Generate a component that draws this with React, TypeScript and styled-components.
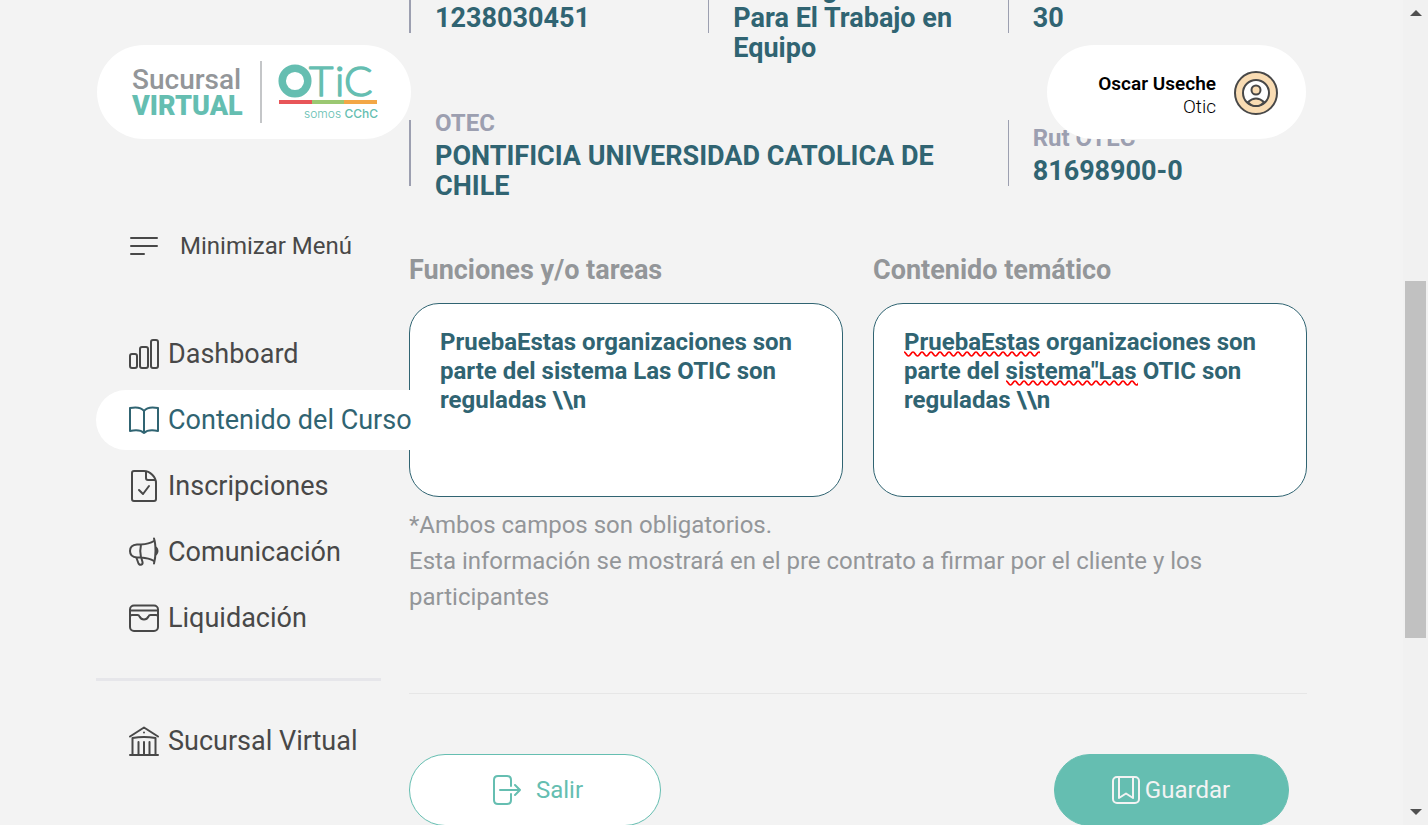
import React from "react";
import styled, { createGlobalStyle, css } from "styled-components";

const GlobalStyle = createGlobalStyle`
  *, *::before, *::after { box-sizing: border-box; }
  body {
    margin: 0;
    background: #f3f3f3;
    font-family: Roboto, "Liberation Sans", sans-serif;
  }
  button, textarea { font-family: inherit; }
`;

const color = {
  teal: "#306472",
  green: "#65beb1",
  grey: "#939699",
  label: "#9c9fb0",
  ink: "#484848",
};

const Shell = styled.div`
  display: flex;
  position: relative;
  height: 100vh;
  overflow: hidden;
`;

const Page = styled.div`
  flex: 1;
  min-width: 0;
  display: flex;
  align-items: flex-start;
  padding: 0 96px;
`;

const ScrollTrack = styled.div`
  flex: 0 0 25px;
  display: flex;
  flex-direction: column;
  align-items: center;
  padding: 10px 2px;
  background: #f1f1f1;
`;

const ScrollThumb = styled.div`
  align-self: stretch;
  flex: 357;
  background: #c1c1c1;
`;

const ScrollGap = styled.div<{ $grow: number }>`
  flex: ${(p) => p.$grow};
`;

const Arrow = styled.svg`
  display: block;
  width: 12px;
  height: 6px;
  fill: #505050;
`;

const Header = styled.header`
  position: absolute;
  z-index: 3;
  top: 45px;
  left: 0;
  right: 25px;
  display: flex;
  justify-content: space-between;
  padding: 0 97px;
`;

const Card = styled.div`
  display: flex;
  align-items: center;
  height: 94px;
  border-radius: 47px;
  background: #fff;
`;

const BrandCard = styled(Card)`
  width: 314px;
  padding-left: 35px;
`;

const BrandName = styled.div`
  width: 130px;
  height: 62px;
  padding-top: 6px;
  border-right: 2px solid #c4c6c8;
  font-size: 28px;
  line-height: 26px;
  font-weight: 500;
  color: ${color.grey};
`;

const BrandStrong = styled.strong`
  display: block;
  font-size: 27px;
  font-weight: 900;
  color: ${color.green};
`;

const OticMark = styled.svg`
  display: block;
  width: 100px;
  height: 58px;
  margin-left: 16px;
`;

const UserCard = styled(Card)`
  width: 259px;
  justify-content: flex-end;
  gap: 18px;
  padding: 2px 28px 0 0;
`;

const UserText = styled.div`
  padding-top: 4px;
  font-size: 19px;
  line-height: 23px;
  font-weight: 300;
  text-align: right;
  color: #000;
`;

const UserName = styled.div`
  font-weight: 600;
`;

const Avatar = styled.svg`
  display: block;
  width: 44px;
  height: 44px;
`;

const Sidebar = styled.nav`
  position: relative;
  z-index: 2;
  flex: 0 0 313px;
  min-width: 0;
  padding-top: 216px;
  color: ${color.ink};
`;

const Icon = styled.svg`
  display: block;
  flex: none;
  width: 30px;
  height: 30px;
  fill: none;
  stroke: currentColor;
  stroke-width: 2;
  stroke-linecap: round;
  stroke-linejoin: round;
  overflow: visible;
`;

const Minimize = styled.button`
  display: flex;
  align-items: center;
  gap: 21px;
  height: 60px;
  margin: 0 0 48px;
  padding: 0 0 0 33px;
  border: 0;
  background: none;
  color: inherit;
  font-size: 24px;
`;

const Menu = styled.ul`
  display: flex;
  flex-direction: column;
  gap: 6px;
  margin: 0;
  padding: 0;
  list-style: none;
`;

const MenuLink = styled.a<{ $active?: boolean }>`
  display: flex;
  align-items: center;
  gap: 9px;
  height: 60px;
  padding-left: 33px;
  border-radius: 30px 0 0 30px;
  font-size: 27px;
  white-space: nowrap;
  text-decoration: none;
  color: inherit;
  ${(p) =>
    p.$active &&
    css`
      margin-right: -2px;
      background: #fff;
      color: ${color.teal};
    `}
`;

const MenuDivider = styled.hr`
  width: 285px;
  height: 3px;
  margin: 30px 0;
  border: 0;
  background: #e6e6ea;
`;

const Main = styled.main`
  flex: 1;
  min-width: 0;
  margin-top: -33px;
`;

const Facts = styled.dl`
  display: grid;
  grid-template-columns: repeat(3, 1fr);
  grid-auto-rows: 66px;
  row-gap: 87px;
  margin: 0;
`;

const Fact = styled.div<{ $span?: number; $bar?: number }>`
  grid-column: span ${(p) => p.$span ?? 1};
  display: flex;
  flex-direction: column;
  justify-content: center;
  padding: 0 24px;
  border-left: ${(p) => p.$bar ?? 1}px solid ${color.label};
`;

const FactLabel = styled.dt`
  flex: none;
  font-size: 24px;
  line-height: 36px;
  font-weight: 700;
  color: ${color.label};
`;

const FactValue = styled.dd`
  flex: none;
  margin: 0;
  font-size: 27px;
  line-height: 30px;
  font-weight: 700;
  color: ${color.teal};
`;

const Fields = styled.div`
  display: grid;
  grid-template-columns: 1fr 1fr;
  gap: 30px;
  margin-top: 66px;
`;

const Field = styled.div`
  position: relative;
  min-width: 0;
`;

const FieldLabel = styled.label`
  display: block;
  margin-bottom: 15px;
  font-size: 27px;
  line-height: 36px;
  font-weight: 700;
  color: ${color.grey};
`;

const TextArea = styled.textarea`
  display: block;
  width: 100%;
  height: 194px;
  padding: 24px 30px;
  border: 1px solid ${color.teal};
  border-radius: 30px;
  outline: 0;
  resize: none;
  background: #fff;
  color: ${color.teal};
  font-size: 24px;
  line-height: 29px;
  font-weight: 700;
`;

const Squiggle = styled.svg<{ $left: number; $top: number; $width: number }>`
  position: absolute;
  left: ${(p) => p.$left}px;
  top: ${(p) => p.$top}px;
  width: ${(p) => p.$width}px;
  height: 6px;
  pointer-events: none;
`;

const Note = styled.p`
  margin: 10px 0 0;
  font-size: 24px;
  line-height: 36px;
  color: ${color.grey};
`;

const Divider = styled.hr`
  height: 1px;
  margin: 78px 0 60px;
  border: 0;
  background: #e6e6e6;
`;

const Actions = styled.div`
  display: flex;
  justify-content: space-between;
  padding-right: 18px;
`;

const Button = styled.button<{ $primary?: boolean }>`
  display: flex;
  align-items: center;
  justify-content: center;
  gap: ${(p) => (p.$primary ? 4 : 13)}px;
  width: ${(p) => (p.$primary ? 235 : 252)}px;
  height: 72px;
  padding: ${(p) => (p.$primary ? "0 2px 0 0" : "0 0 0 6px")};
  border: 1px solid ${color.green};
  border-radius: 36px;
  background: ${(p) => (p.$primary ? color.green : "#fff")};
  color: ${(p) => (p.$primary ? "#f3f3f3" : color.green)};
  font-size: 24px;
`;

const icons = {
  dashboard: (
    <>
      <rect x="1" y="15" width="7" height="14" rx="2" />
      <rect x="11" y="8" width="8" height="21" rx="2" />
      <rect x="22" y="1" width="7" height="28" rx="2" />
    </>
  ),
  book: (
    <path d="M15 6C12 2 6 2 1 3V26C6 25 12 25 15 28C18 25 24 25 29 26V3C24 2 18 2 15 6ZM15 6V28" />
  ),
  doc: (
    <>
      <path d="M5 0H15C21 0 27 6 27 12V28Q27 30 25 30H5Q3 30 3 28V2Q3 0 5 0Z" />
      <path d="M17 1V7Q17 9 19 9H26M10 19L14 23L20 15" />
    </>
  ),
  megaphone: (
    <>
      <path d="M8 7.500H12Q20 7 25 4M25 24Q20 21 12 20.500H8Q1 20 1 14Q1 8 8 7.500M12 7.500Q10.500 14 12 20.500" />
      <path d="M25 1.500Q26.500 6 26.500 14Q26.500 21 25 26.500M27 10.500Q28.500 12 28.500 14Q28.500 16 27 17.500" />
      <path d="M7.500 21L9.500 26.500Q10.500 28.500 12.500 27.500Q14 27 13.500 25L12.500 21.500" />
    </>
  ),
  wallet: (
    <>
      <rect x="1" y="2.500" width="28" height="25.500" rx="4" />
      <path d="M1.500 7.500H28.500M1 14Q1 12 3 12H8.500Q10 12 10.500 13.500Q12 16.500 15 16.500Q18 16.500 19.500 13.500Q20 12 21.500 12H27Q29 12 29 14" />
    </>
  ),
  bank: (
    <path d="M1 10.500L15 1.500L29 10.500M3.500 29V12Q15 10 26.500 12V29M9.500 16V28M15 16V28M20.500 16V28M1 29H29M15 6.500V6.600" />
  ),
};

const mainMenu: { icon: keyof typeof icons; text: string; active?: boolean }[] = [
  { icon: "dashboard", text: "Dashboard" },
  { icon: "book", text: "Contenido del Curso", active: true },
  { icon: "doc", text: "Inscripciones" },
  { icon: "megaphone", text: "Comunicación" },
  { icon: "wallet", text: "Liquidación" },
];

function MenuItem({ icon, text, active }: { icon: keyof typeof icons; text: string; active?: boolean }) {
  return (
    <li>
      <MenuLink href="#" $active={active} aria-current={active ? "page" : undefined}>
        <Icon viewBox="0 0 30 30" aria-hidden="true">{icons[icon]}</Icon>
        {text}
      </MenuLink>
    </li>
  );
}

function SpellMark({ left, top, width }: { left: number; top: number; width: number }) {
  let d = "M0 1";
  for (let x = 0; x < width; x += 9) d += "c2 0 2.500 4 4.500 4s2.500-4 4.500-4";
  return (
    <Squiggle $left={left} $top={top} $width={width} viewBox={`0 0 ${width} 6`} aria-hidden="true">
      <path d={d} fill="none" stroke="#f00" strokeWidth="1.700" />
    </Squiggle>
  );
}

export default function App() {
  return (
    <>
      <GlobalStyle />
      <Shell>
        <Header>
          <BrandCard>
            <BrandName>
              Sucursal
              <BrandStrong>VIRTUAL</BrandStrong>
            </BrandName>
            <OticMark viewBox="0 0 100 58" role="img" aria-label="OTIC somos CChC">
              <circle cx="17" cy="18" r="12.800" fill="none" stroke={color.green} strokeWidth="7.500" />
              <text
                x="31 57 66"
                y="33"
                fontFamily="Lato, sans-serif"
                fontWeight="300"
                fontSize="42"
                fill={color.green}
                stroke={color.green}
                strokeWidth="1.500"
                strokeLinejoin="round"
              >
                TiC
              </text>
              <rect x="1" y="37" width="33" height="4" fill="#e85558" />
              <rect x="34" y="37" width="32" height="4" fill="#9bc872" />
              <rect x="66" y="37" width="33" height="4" fill="#f3a746" />
              <text x="26" y="55" fontFamily="Inter, sans-serif" fontWeight="300" fontSize="12" fill={color.green}>
                somos <tspan fontWeight="500">CChC</tspan>
              </text>
            </OticMark>
          </BrandCard>
          <UserCard>
            <UserText>
              <UserName>Oscar Useche</UserName>
              <div>Otic</div>
            </UserText>
            <Avatar viewBox="0 0 44 44" fill="none" stroke={color.ink} strokeWidth="2" role="img" aria-label="Usuario">
              <circle cx="22" cy="22" r="21" fill="#f9dcb3" />
              <circle cx="22" cy="22" r="13" fill="#fff" />
              <path d="M14 31Q22 24 30 31Q27 35 22 35Q17 35 14 31Z" fill="#f9dcb3" />
              <circle cx="22" cy="19" r="4.500" fill="#f9dcb3" />
            </Avatar>
          </UserCard>
        </Header>

        <Page>
          <Sidebar aria-label="Menú principal">
            <Minimize type="button">
              <Icon viewBox="0 0 30 30" aria-hidden="true">
                <path d="M2 7H28M2 15H28M2 23H15" />
              </Icon>
              Minimizar Menú
            </Minimize>
            <Menu>
              {mainMenu.map((item) => (
                <MenuItem key={item.text} {...item} />
              ))}
            </Menu>
            <MenuDivider />
            <Menu>
              <MenuItem icon="bank" text="Sucursal Virtual" />
            </Menu>
          </Sidebar>

          <Main>
            <Facts>
              <Fact $bar={2}>
                <FactLabel>Código Sence</FactLabel>
                <FactValue>1238030451</FactValue>
              </Fact>
              <Fact>
                <FactLabel>Nombre</FactLabel>
                <FactValue>Liderazgo Efectivo Para El Trabajo en Equipo</FactValue>
              </Fact>
              <Fact>
                <FactLabel>Horas</FactLabel>
                <FactValue>30</FactValue>
              </Fact>
              <Fact $span={2} $bar={2}>
                <FactLabel>OTEC</FactLabel>
                <FactValue>PONTIFICIA UNIVERSIDAD CATOLICA DE CHILE</FactValue>
              </Fact>
              <Fact>
                <FactLabel>Rut OTEC</FactLabel>
                <FactValue>81698900-0</FactValue>
              </Fact>
            </Facts>

            <Fields>
              <Field>
                <FieldLabel htmlFor="funciones">Funciones y/o tareas</FieldLabel>
                <TextArea
                  id="funciones"
                  defaultValue={"PruebaEstas organizaciones son parte del sistema Las OTIC son reguladas \\\\n"}
                />
              </Field>
              <Field>
                <FieldLabel htmlFor="contenido">Contenido temático</FieldLabel>
                <TextArea
                  id="contenido"
                  defaultValue={'PruebaEstas organizaciones son parte del sistema"Las OTIC son reguladas \\\\n'}
                />
                <SpellMark left={31} top={99} width={136} />
                <SpellMark left={133} top={128} width={132} />
              </Field>
            </Fields>

            <Note>
              *Ambos campos son obligatorios.
              <br />
              Esta información se mostrará en el pre contrato a firmar por el cliente y los participantes
            </Note>

            <Divider />

            <Actions>
              <Button type="button">
                <Icon viewBox="0 0 30 30" aria-hidden="true">
                  <path d="M18 11V5Q18 1 14 1H5Q1 1 1 5V25Q1 29 5 29H14Q18 29 18 25V19M7 15H27M22 10L27 15L22 20" />
                </Icon>
                Salir
              </Button>
              <Button type="button" $primary>
                <Icon viewBox="0 0 30 30" aria-hidden="true">
                  <rect x="2" y="2" width="26" height="26" rx="4" />
                  <path d="M8 2V23L15 18.500L22 23V2" />
                </Icon>
                Guardar
              </Button>
            </Actions>
          </Main>
        </Page>

        <ScrollTrack aria-hidden="true">
          <Arrow viewBox="0 0 12 6"><path d="M0 6L6 0L12 6Z" /></Arrow>
          <ScrollGap $grow={265} />
          <ScrollThumb />
          <ScrollGap $grow={171} />
          <Arrow viewBox="0 0 12 6"><path d="M0 0L6 6L12 0Z" /></Arrow>
        </ScrollTrack>
      </Shell>
    </>
  );
}
